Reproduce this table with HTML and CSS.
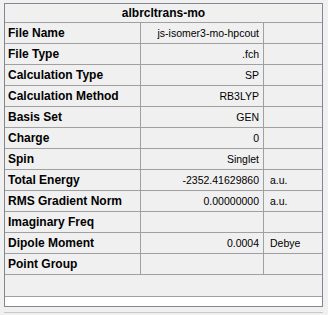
FILE: index.html
```html
<!DOCTYPE html>
<html lang="en">
<head>
<meta charset="utf-8">
<title>albrcltrans-mo</title>
<link rel="stylesheet" href="styles.css">
</head>
<body>
<div class="prop-panel">
  <div class="prop-grid">
    <div class="prop-title">albrcltrans-mo</div>

    <div class="key">File Name</div><div class="val">js-isomer3-mo-hpcout</div><div class="unit"></div>
    <div class="key">File Type</div><div class="val">.fch</div><div class="unit"></div>
    <div class="key">Calculation Type</div><div class="val">SP</div><div class="unit"></div>
    <div class="key">Calculation Method</div><div class="val">RB3LYP</div><div class="unit"></div>
    <div class="key">Basis Set</div><div class="val">GEN</div><div class="unit"></div>
    <div class="key">Charge</div><div class="val">0</div><div class="unit"></div>
    <div class="key">Spin</div><div class="val">Singlet</div><div class="unit"></div>
    <div class="key">Total Energy</div><div class="val">-2352.41629860</div><div class="unit">a.u.</div>
    <div class="key">RMS Gradient Norm</div><div class="val">0.00000000</div><div class="unit">a.u.</div>
    <div class="key">Imaginary Freq</div><div class="val"></div><div class="unit"></div>
    <div class="key">Dipole Moment</div><div class="val">0.0004</div><div class="unit">Debye</div>
    <div class="key">Point Group</div><div class="val"></div><div class="unit"></div>

    <div class="filler"></div>
  </div>
  <div class="panel-foot"></div>
</div>
<div class="strip-edge"></div>
</body>
</html>
```

FILE: styles.css
```css
html, body {
  margin: 0;
  padding: 0;
  background: #f0f0f0;
}

body {
  padding: 3px 0 0 4px;
  font-family: "Liberation Sans", Arial, sans-serif;
  color: #000;
}

.prop-panel {
  width: 319px;
  box-sizing: border-box;
  border: 1px solid #828790;
  background: #f0f0f0;
}

.prop-grid {
  display: grid;
  grid-template-columns: 136px 123px 58px;
}

.prop-grid > div {
  box-sizing: border-box;
  height: 21px;
  border-bottom: 1px solid #a0a0a0;
  white-space: nowrap;
  overflow: hidden;
}

.prop-title {
  grid-column: 1 / -1;
  height: 19px !important;
  font-size: 12px;
  font-weight: bold;
  text-align: center;
  line-height: 18px;
}

.key {
  border-right: 1px solid #a0a0a0;
  padding-left: 3px;
  font-size: 12px;
  font-weight: bold;
  line-height: 20px;
}

.val {
  border-right: 1px solid #a0a0a0;
  padding-right: 4px;
  text-align: right;
  font-size: 10.5px;
  line-height: 20px;
}

.unit {
  padding-left: 6px;
  font-size: 10.5px;
  line-height: 20px;
}

.prop-grid > .filler {
  grid-column: 1 / -1;
  height: 22px;
}

.panel-foot {
  height: 9px;
  background: #fff;
}

.strip-edge {
  width: 319px;
  height: 1px;
  margin-top: 5px;
  background: #c8c8c8;
}
```
